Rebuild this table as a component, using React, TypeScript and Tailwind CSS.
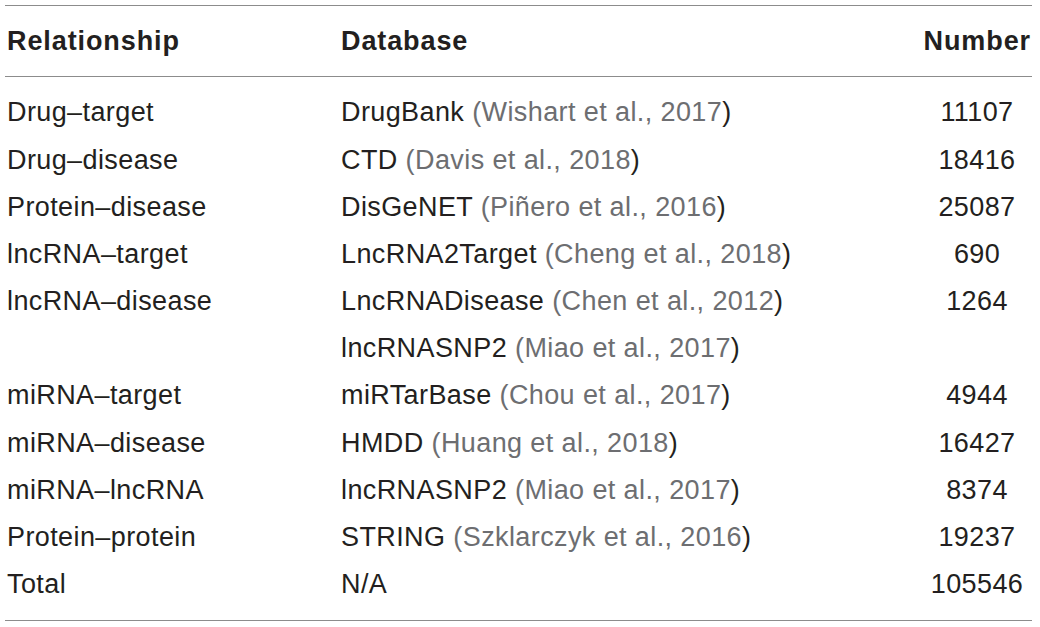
const rows: { rel: string; db: string; cite: string; num: string }[] = [
  { rel: "Drug–target", db: "DrugBank", cite: "Wishart et al., 2017", num: "11107" },
  { rel: "Drug–disease", db: "CTD", cite: "Davis et al., 2018", num: "18416" },
  { rel: "Protein–disease", db: "DisGeNET", cite: "Piñero et al., 2016", num: "25087" },
  { rel: "lncRNA–target", db: "LncRNA2Target", cite: "Cheng et al., 2018", num: "690" },
  { rel: "lncRNA–disease", db: "LncRNADisease", cite: "Chen et al., 2012", num: "1264" },
  { rel: "", db: "lncRNASNP2", cite: "Miao et al., 2017", num: "" },
  { rel: "miRNA–target", db: "miRTarBase", cite: "Chou et al., 2017", num: "4944" },
  { rel: "miRNA–disease", db: "HMDD", cite: "Huang et al., 2018", num: "16427" },
  { rel: "miRNA–lncRNA", db: "lncRNASNP2", cite: "Miao et al., 2017", num: "8374" },
  { rel: "Protein–protein", db: "STRING", cite: "Szklarczyk et al., 2016", num: "19237" },
  { rel: "Total", db: "N/A", cite: "", num: "105546" },
];

export default function App() {
  return (
    <div className="w-[1040px] h-[627px] bg-white pt-[5px] pl-[5px] font-['Liberation_Sans',Arial,sans-serif] text-[27px] tracking-[0.4px] text-[#231f20]">
      <div className="w-[1027px] border-t border-b border-[#8c8c8c]">
        {/* header */}
        <div className="flex items-center h-[71px] border-b border-[#8c8c8c] font-bold tracking-[0.9px] pt-[1px]">
          <div className="w-[336px] pl-[2px]">Relationship</div>
          <div className="flex-1">Database</div>
          <div className="w-[110px] text-right pr-[1px]">Number</div>
        </div>

        {/* body */}
        <div className="py-[12px]">
          {rows.map((r, i) => (
            <div key={i} className="flex items-center h-[47.2px]">
              <div className="w-[336px] pl-[2px]">{r.rel}</div>
              <div className="flex-1">
                {r.db}
                {r.cite && (
                  <>
                    {" "}
                    <span className="text-[#6d6e71]">({r.cite}</span>)
                  </>
                )}
              </div>
              <div className="w-[110px] text-center">{r.num}</div>
            </div>
          ))}
        </div>
      </div>
    </div>
  );
}
